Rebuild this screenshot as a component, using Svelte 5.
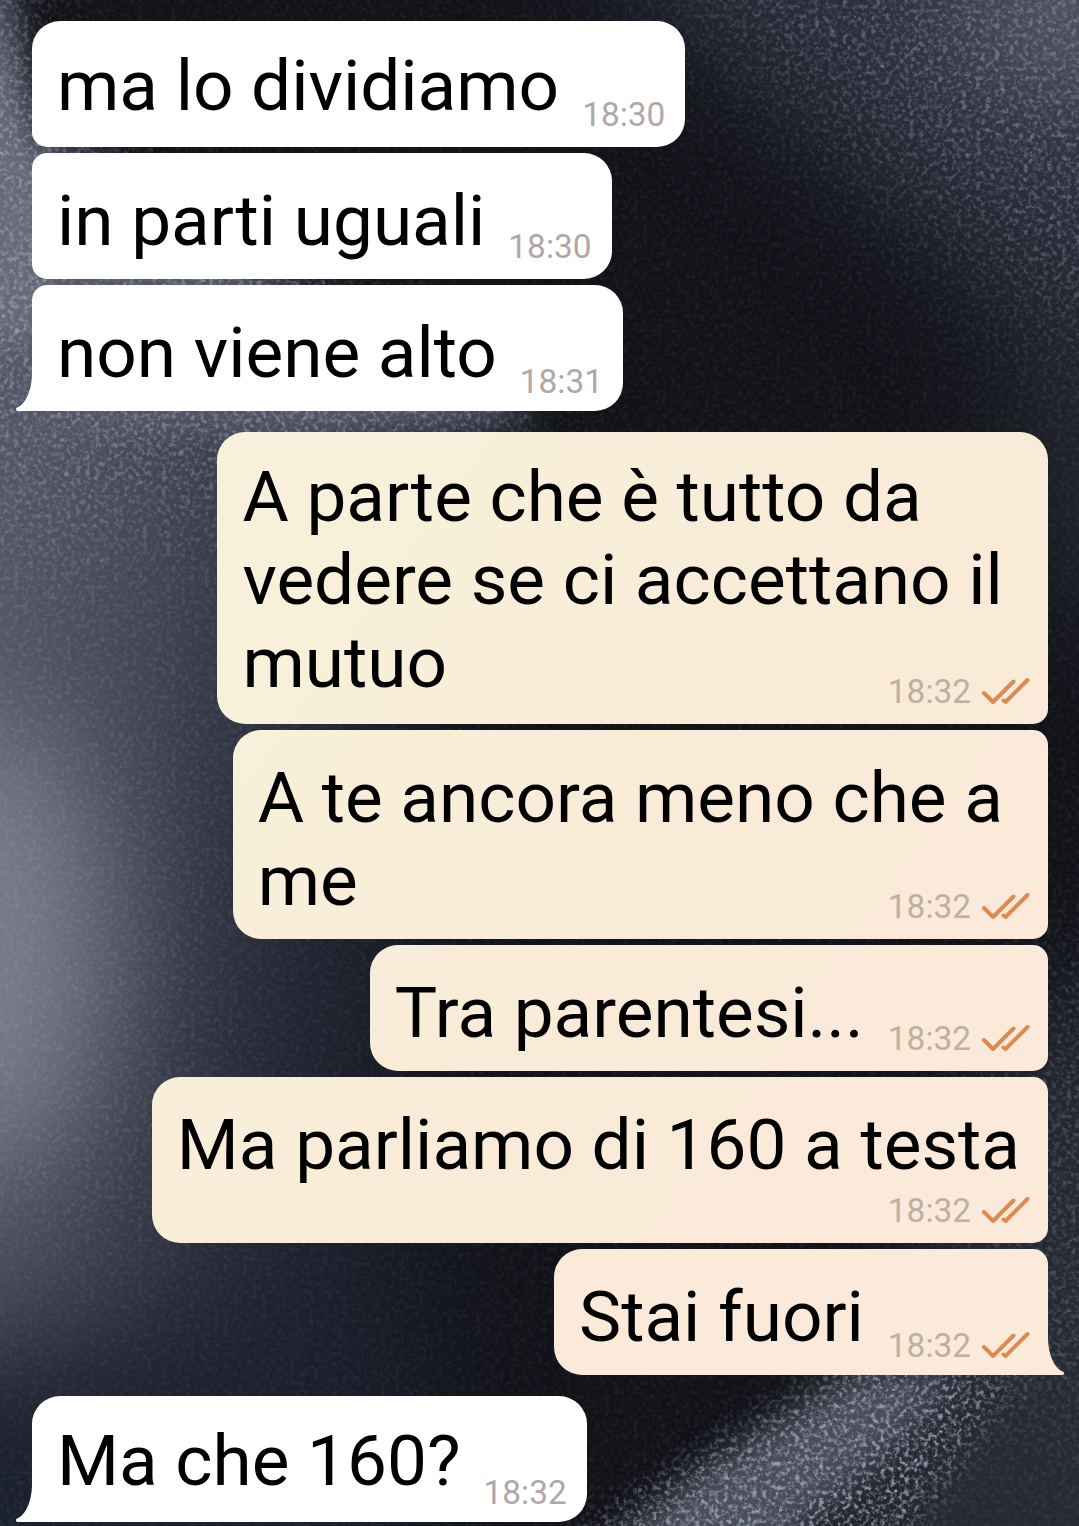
<script>
    const messages = [
        { lines: ["ma lo dividiamo"], time: "18:30", first: true },
        { lines: ["in parti uguali"], time: "18:30" },
        { lines: ["non viene alto"], time: "18:31", last: true },
        {
            lines: ["A parte che è tutto da", "vedere se ci accettano il", "mutuo"],
            time: "18:32",
            mine: true,
            first: true,
        },
        { lines: ["A te ancora meno che a", "me"], time: "18:32", mine: true },
        { lines: ["Tra parentesi..."], time: "18:32", mine: true },
        { lines: ["Ma parliamo di 160 a testa"], time: "18:32", mine: true, below: true },
        { lines: ["Stai fuori"], time: "18:32", mine: true, last: true },
        { lines: ["Ma che 160?"], time: "18:32", first: true, last: true },
    ];
</script>

<main>
    <svg class="wallpaper" viewBox="0 0 1079 1526" aria-hidden="true">
        <defs>
            <filter id="soft" x="-100%" y="-50%" width="300%" height="200%" color-interpolation-filters="sRGB">
                <feGaussianBlur stdDeviation="60" />
            </filter>
            <filter id="edge" x="-30%" y="-30%" width="160%" height="160%" color-interpolation-filters="sRGB">
                <feGaussianBlur stdDeviation="16" />
            </filter>
            <filter id="grain" x="0" y="0" width="100%" height="100%" color-interpolation-filters="sRGB">
                <feTurbulence type="fractalNoise" baseFrequency="0.21" numOctaves="4" seed="7" />
                <feColorMatrix values="0 0 0 0 0.7  0 0 0 0 0.74  0 0 0 0 0.8  2.6 2.2 0 0 -2.25" />
            </filter>
            <filter id="stars" x="0" y="0" width="100%" height="100%" color-interpolation-filters="sRGB">
                <feTurbulence type="fractalNoise" baseFrequency="0.14" numOctaves="3" seed="21" />
                <feColorMatrix values="0 0 0 0 0.7  0 0 0 0 0.74  0 0 0 0 0.8  6 2 0 0 -5.4" />
                <feGaussianBlur stdDeviation="0.5" />
            </filter>
            <linearGradient id="left" x1="0" y1="0" x2="440" y2="60" gradientUnits="userSpaceOnUse">
                <stop offset="0" stop-color="#5a5e6d" />
                <stop offset="0.5" stop-color="#444857" />
                <stop offset="1" stop-color="#1e222e" />
            </linearGradient>
            <mask id="lit">
                <rect width="1079" height="1526" fill="#161616" />
                <g filter="url(#soft)">
                    <path d="M-80 -60L0 -20L60 160L340 330L520 420L300 500L-80 560Z" fill="#888" />
                    <path d="M640 -60H1180V420L960 220Z" fill="#808080" />
                    <path d="M-80 560H220V1240H-80Z" fill="#303030" />
                    <path d="M1040 960H1160V1420H1000Z" fill="#666" />
                </g>
                <path d="M-20 -20L10 -20L50 140L110 160L320 290L540 420L300 440L-40 420Z" fill="#999" filter="url(#edge)" />
                <path d="M560 1550L700 1455L860 1362L1020 1370L900 1550Z" fill="#eee" filter="url(#edge)" />
            </mask>
        </defs>
        <rect width="1079" height="1526" fill="#121318" />
        <g filter="url(#soft)">
            <path d="M-200 250L250 280L520 400L420 620L400 1200L200 1700H-200Z" fill="url(#left)" />
            <ellipse cx="-10" cy="950" rx="120" ry="230" fill="#797b89" />
            <path d="M-200 1380L120 1340L420 1240V1700H-200Z" fill="#1b202d" />
            <path d="M520 -120H1280V450L1000 290Z" fill="#2b2f3c" />
            <ellipse cx="1079" cy="10" rx="130" ry="90" fill="#555766" />
            <path d="M990 280H1240V620H1040Z" fill="#22252e" />
            <path d="M1020 1000H1240V1640H760Z" fill="#262a34" />
        </g>
        <g filter="url(#edge)">
            <path d="M-60 -60L10 -20L40 140L110 160L250 270L540 420L320 440L180 430L-60 450Z" fill="#525666" />
            <path d="M-60 30L0 40L50 190V330L-60 360Z" fill="#666a7a" />
            <path d="M590 1560L700 1470L850 1378L960 1372L890 1450L760 1560Z" fill="#4a4e5b" />
        </g>
        <g mask="url(#lit)">
            <rect width="1079" height="1526" filter="url(#grain)" opacity="0.75" />
            <rect width="1079" height="1526" filter="url(#stars)" />
        </g>
    </svg>

    <div class="chat">
        {#each messages as msg}
            <div
                class="bubble"
                class:mine={msg.mine}
                class:first={msg.first}
                class:last={msg.last}
                class:multi={msg.lines.length > 1}
                class:below={msg.below}
            >
                <p>
                    {#each msg.lines as line}
                        <span>{line}</span>
                    {/each}
                </p>
                <div class="meta">
                    <time>{msg.time}</time>
                    {#if msg.mine}
                        <svg class="ticks" viewBox="0 0 50 30">
                            <path d="M4 16L13 25L33.5 4.5M23.5 23.5L25.5 25L47.5 3" />
                        </svg>
                    {/if}
                </div>
                {#if msg.last}
                    <svg class="tail" viewBox="0 0 17 38">
                        <path d="M17 0H16C16 18 9 32 1 34.5Q-1 36 1 38H17Z" />
                    </svg>
                {/if}
            </div>
        {/each}
    </div>
</main>

<style>
    :global(body) {
        background: #121318;
    }
    main {
        position: relative;
        width: 1079px;
        height: 1526px;
        overflow: hidden;
        font-family: Roboto, sans-serif;
    }
    .wallpaper {
        position: absolute;
        inset: 0;
        width: 100%;
        height: 100%;
    }
    .chat {
        position: relative;
        display: flex;
        flex-direction: column;
        align-items: flex-start;
        gap: 6px;
        padding: 21px 31px 0 32px;
    }
    .bubble {
        position: relative;
        box-sizing: border-box;
        display: flex;
        align-items: flex-end;
        min-height: 126px;
        padding: 26px 20px 0 25px;
        border-radius: 15px 28px 28px 15px;
        background: white;
    }
    .bubble.first {
        padding-top: 23px;
        border-top-left-radius: 28px;
    }
    .bubble.last {
        border-bottom-left-radius: 0;
    }
    .bubble.last:not(:last-child) {
        margin-bottom: 15px;
    }
    .bubble.mine {
        align-self: flex-end;
        padding-right: 18px;
        border-radius: 28px 15px 15px 28px;
        background: linear-gradient(125deg, #f8f0da 35%, #f9ebd7 60%, #fbe9da 80%) fixed;
    }
    .bubble.mine.first {
        border-top-right-radius: 28px;
    }
    .bubble.mine.last {
        border-bottom-left-radius: 28px;
        border-bottom-right-radius: 0;
        background: #fbe9da;
    }
    p {
        align-self: flex-start;
        margin: 0;
        font-size: 71.1px;
        line-height: 83px;
        color: black;
        white-space: nowrap;
    }
    p span {
        display: block;
    }
    .meta {
        display: flex;
        align-items: center;
        height: 40px;
        margin-left: 23px;
        margin-bottom: 12px;
        color: #afa7a8;
    }
    .last .meta {
        margin-bottom: 9px;
    }
    .mine .meta {
        margin-left: 24px;
        color: #bdb0a2;
    }
    time {
        font-size: 33.4px;
        line-height: 40px;
    }
    .ticks {
        width: 50px;
        height: 30px;
        margin-left: 9px;
        fill: none;
        stroke: #d98b52;
        stroke-width: 4;
        stroke-linecap: round;
        stroke-linejoin: round;
    }
    .bubble.multi {
        padding-bottom: 17px;
    }
    .bubble.multi.first {
        padding-bottom: 20px;
    }
    .multi .meta {
        margin-left: -115px;
        margin-bottom: -5px;
    }
    .multi.first .meta {
        margin-bottom: -8px;
    }
    .bubble.below {
        flex-direction: column;
        height: 166px;
        padding-right: 28px;
    }
    .below .meta {
        margin-top: auto;
        margin-right: -10px;
    }
    .tail {
        position: absolute;
        left: -16px;
        bottom: 0;
        width: 17px;
        height: 38px;
        fill: white;
    }
    .mine .tail {
        left: auto;
        right: -16px;
        transform: scaleX(-1);
        fill: #fbe9da;
    }
</style>
